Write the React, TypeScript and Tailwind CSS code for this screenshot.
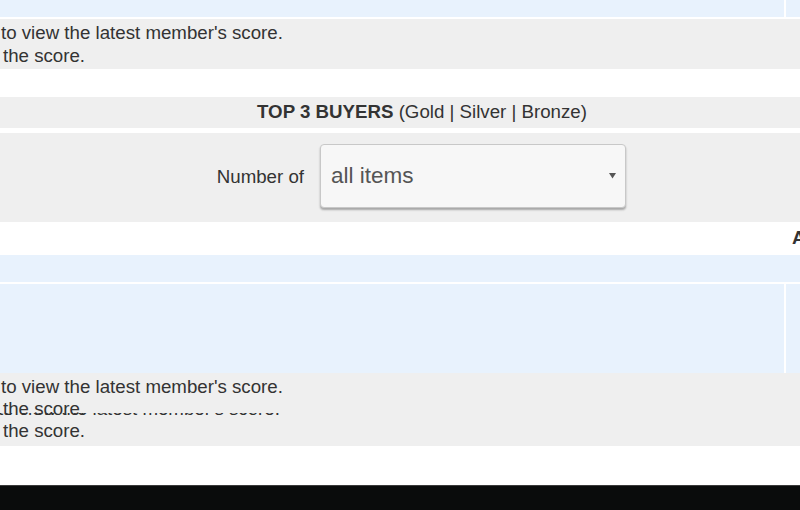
import React from "react";

const font = { fontFamily: '"Liberation Sans", Arial, sans-serif' };

export default function App() {
  return (
    <div className="w-[800px] h-[510px] overflow-hidden bg-white text-[#333] text-[18.7px]" style={font}>
      {/* top blue row */}
      <div className="flex h-[17px]">
        <div className="w-[786px] shrink-0 bg-[#e8f2fd] border-r-2 border-white" />
        <div className="flex-1 bg-[#e8f2fd]" />
      </div>
      <div className="h-[2px]" />
      <div className="h-[50px] bg-[#efefef] pt-[1.5px] leading-[23px] whitespace-nowrap">
        <div className="pl-[1px]">to view the latest member's score.</div>
        <div className="pl-[3px]">the score.</div>
      </div>
      <div className="h-[28px]" />
      <div className="h-[31px] bg-[#efefef] flex items-center justify-center pl-[44px] whitespace-nowrap">
        <span className="font-bold">TOP 3 BUYERS</span>
        <span>&nbsp;(Gold | Silver | Bronze)</span>
      </div>
      <div className="h-[5px]" />
      <div className="h-[89px] bg-[#efefef] flex items-start">
        <div className="w-[304px] shrink-0 text-right mt-[30px]">Number of</div>
        <div className="ml-[16px] mt-[11px] w-[306px] h-[64px] rounded-[4px] border border-[#c8c8c8] bg-[#f7f7f7] shadow-[0_2px_2px_rgba(0,0,0,0.3)] flex items-center justify-between pl-[10px] pr-[9px]">
          <span className="text-[22.5px] text-[#555] -mt-[1px]">all items</span>
          <svg width="7" height="7" viewBox="0 0 7 7" className="-mt-[1px]">
            <polygon points="0,1 7,1 3.5,6.5" fill="#555" />
          </svg>
        </div>
      </div>
      <div className="h-[33px] relative">
        <span className="absolute left-[792px] top-[2px] font-bold">A</span>
      </div>
      <div className="h-[27px] bg-[#e8f2fd]" />
      <div className="h-[2px]" />
      <div className="flex h-[89px]">
        <div className="w-[786px] shrink-0 bg-[#e8f2fd] border-r-2 border-white" />
        <div className="flex-1 bg-[#e8f2fd]" />
      </div>
      <div className="h-[73px] bg-[#efefef] pt-[3px] leading-[22px] whitespace-nowrap">
        <div className="pl-[1px]">to view the latest member's score.</div>
        <div className="pl-[3px] relative">
          the score.
          <div className="absolute -left-[2px] top-[15px] h-[2.5px] overflow-hidden">
            <div className="-mt-[15px] leading-[22px]">to view the latest member's score.</div>
          </div>
        </div>
        <div className="pl-[3px]">the score.</div>
      </div>
      <div className="h-[39px]" />
      <div className="h-[25px] bg-[#0a0c0c] border-t border-[#3a3a3a]" />
    </div>
  );
}
